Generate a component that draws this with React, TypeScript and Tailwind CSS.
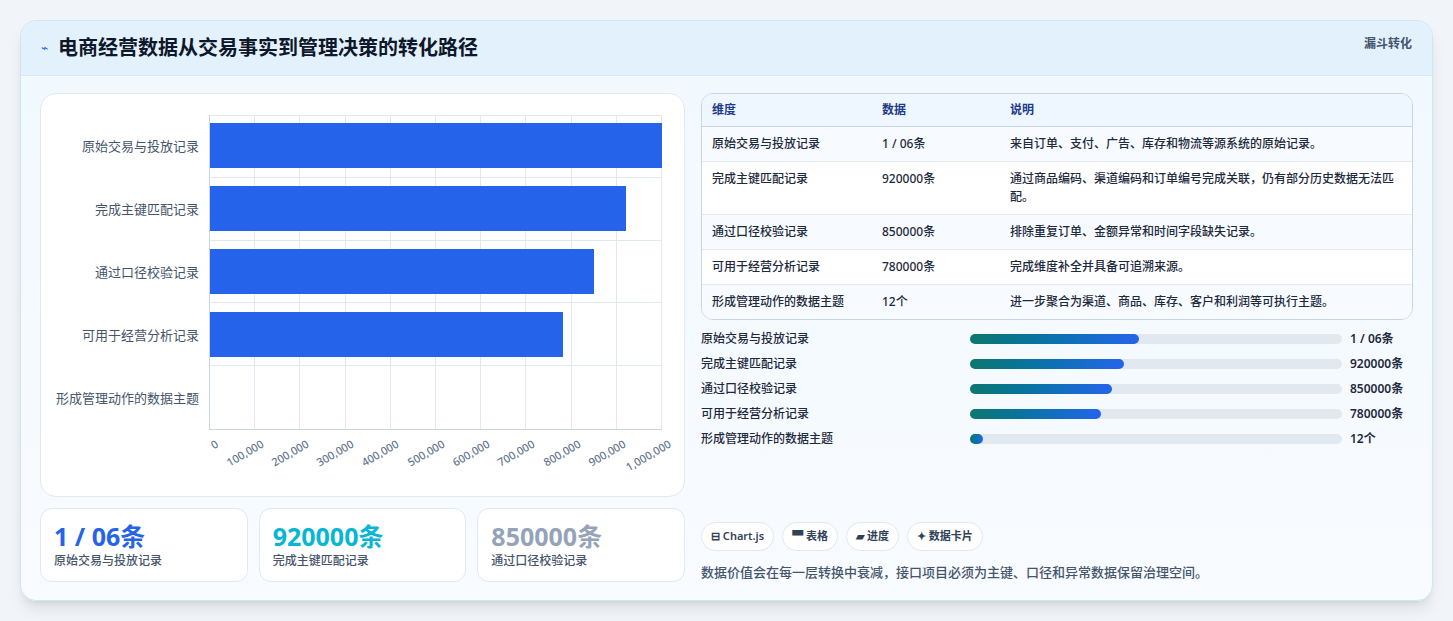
const rows = [
  { name: "原始交易与投放记录", value: "1 / 06条", v: 1000000, desc: "来自订单、支付、广告、库存和物流等源系统的原始记录。", pct: 45.5 },
  { name: "完成主键匹配记录", value: "920000条", v: 920000, desc: "通过商品编码、渠道编码和订单编号完成关联，仍有部分历史数据无法匹配。", pct: 41.5 },
  { name: "通过口径校验记录", value: "850000条", v: 850000, desc: "排除重复订单、金额异常和时间字段缺失记录。", pct: 38.3 },
  { name: "可用于经营分析记录", value: "780000条", v: 780000, desc: "完成维度补全并具备可追溯来源。", pct: 35.2 },
  { name: "形成管理动作的数据主题", value: "12个", v: 12, desc: "进一步聚合为渠道、商品、库存、客户和利润等可执行主题。", pct: 3.4 },
];

const ticks = ["0", "100,000", "200,000", "300,000", "400,000", "500,000", "600,000", "700,000", "800,000", "900,000", "1,000,000"];

function Chart() {
  return (
    <div className="flex h-[404px] flex-col rounded-2xl border border-slate-200 bg-white pt-[21px] pr-[22px]">
      <div className="flex">
        <div className="flex w-[168px] flex-col">
          {rows.map((r) => (
            <div key={r.name} className="flex h-[63px] items-center justify-end pr-[10px] text-[13px] text-slate-600">
              {r.name}
            </div>
          ))}
        </div>
        <div className="relative h-[315px] flex-1 border-b border-l border-slate-300">
          <div className="absolute inset-0 flex">
            {ticks.slice(1).map((t) => (
              <div key={t} className="flex-1 border-r border-t border-slate-200" />
            ))}
          </div>
          <div className="absolute inset-0 flex flex-col">
            {rows.map((r, i) => (
              <div key={r.name} className={"flex h-[63px] items-center " + (i < 4 ? "border-b border-slate-200" : "")}>
                <div className="h-[45px] bg-[#2563eb]" style={{ width: `${(r.v / 1000000) * 100}%` }} />
              </div>
            ))}
          </div>
        </div>
      </div>
      <div className="relative ml-[168px] h-[50px]">
        {ticks.map((t, i) => (
          <span
            key={t}
            className="absolute top-[6px] origin-top-right -rotate-[30deg] whitespace-nowrap text-[11px] font-medium text-slate-500"
            style={{ right: `${100 - i * 10}%`, marginRight: -4 }}
          >
            {t}
          </span>
        ))}
      </div>
    </div>
  );
}

export default function App() {
  return (
    <div className="min-h-screen bg-[#f1f5f9] p-[20px] pb-[22px]" style={{ fontFamily: '"Noto Sans", "Noto Sans CJK SC", sans-serif' }}>
      <div className="overflow-hidden rounded-2xl border border-[#cde7f2] bg-gradient-to-b from-[#f1f8ff] to-[#f8fbff] shadow-lg">
        <div className="flex h-[55px] items-center justify-between border-b border-[#d7e9f8] bg-[#e3f1fd] px-[20px]">
          <div className="flex items-center gap-[10px]">
            <span className="text-[12px] text-[#2563eb]">⌁</span>
            <h1 className="text-[20px] font-bold text-[#0f172a]">电商经营数据从交易事实到管理决策的转化路径</h1>
          </div>
          <span className="-mt-[8px] text-[12px] font-bold text-slate-600">漏斗转化</span>
        </div>
        <div className="flex gap-[16px] px-[19px] pt-[17px] pb-[18px]">
          <div className="flex w-[645px] flex-col gap-[11px]">
            <Chart />
            <div className="grid grid-cols-3 gap-[11px]">
              {[
                { v: "1 / 06条", c: "text-[#2563eb]", l: "原始交易与投放记录" },
                { v: "920000条", c: "text-[#06b6d4]", l: "完成主键匹配记录" },
                { v: "850000条", c: "text-[#94a3b8]", l: "通过口径校验记录" },
              ].map((s) => (
                <div key={s.l} className="flex h-[74px] flex-col justify-center rounded-xl border border-slate-200 bg-white px-[13px]">
                  <div className={"text-[25px] font-bold leading-[32px] " + s.c}>{s.v}</div>
                  <div className="text-[12px] font-medium text-slate-600">{s.l}</div>
                </div>
              ))}
            </div>
          </div>
          <div className="flex flex-1 flex-col">
            <div className="overflow-hidden rounded-xl border border-slate-300 bg-white">
              <div className="flex h-[33px] items-center border-b border-slate-300 bg-[#eef6ff] text-[12px] font-semibold text-[#1e3a8a]">
                <div className="w-[180px] pl-[10px]">维度</div>
                <div className="w-[128px]">数据</div>
                <div className="flex-1">说明</div>
              </div>
              {rows.map((r, i) => (
                <div key={r.name} className={"flex py-[8px] text-[12px] font-medium leading-[18px] text-slate-800 " + (i < 4 ? "border-b border-slate-200 " : "") + (i % 2 ? "bg-white" : "bg-[#f7fbff]")}>
                  <div className="w-[180px] pl-[10px]">{r.name}</div>
                  <div className="w-[128px]">{r.value}</div>
                  <div className="flex-1 pr-[16px]">{r.desc}</div>
                </div>
              ))}
            </div>
            <div className="mt-[10px] flex flex-col gap-[7px]">
              {rows.map((r) => (
                <div key={r.name} className="flex h-[18px] items-center text-[12px] font-medium text-slate-800">
                  <div className="w-[269px]">{r.name}</div>
                  <div className="h-[10px] w-[372px] rounded-full bg-[#e2e8f0]">
                    <div className="h-full rounded-full bg-gradient-to-r from-[#0f766e] to-[#2563eb]" style={{ width: `${r.pct}%` }} />
                  </div>
                  <div className="pl-[8px] font-semibold">{r.value}</div>
                </div>
              ))}
            </div>
            <div className="mt-auto flex gap-[8px] text-[11px] font-semibold text-slate-700">
              {["⊟ Chart.js", "▀ 表格", "▰ 进度", "✦ 数据卡片"].map((c) => (
                <span key={c} className="rounded-full border border-slate-200 bg-white px-[9px] py-[5px]">{c}</span>
              ))}
            </div>
            <p className="mt-[12px] text-[13px] font-medium text-slate-600">数据价值会在每一层转换中衰减，接口项目必须为主键、口径和异常数据保留治理空间。</p>
          </div>
        </div>
      </div>
    </div>
  );
}
